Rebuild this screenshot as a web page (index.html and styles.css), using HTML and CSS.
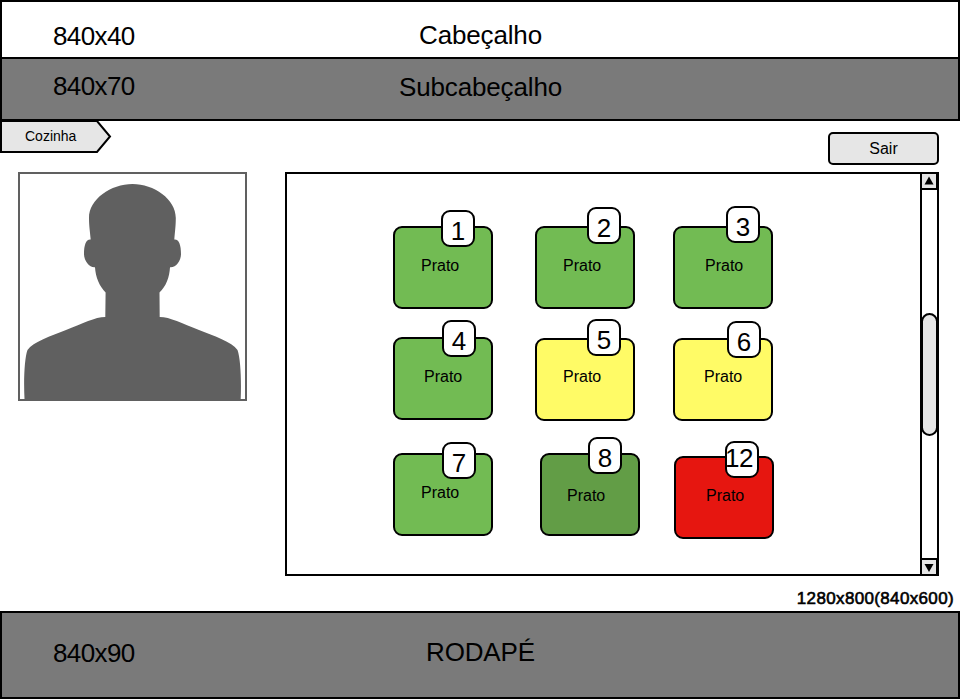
FILE: index.html
```html
<!DOCTYPE html>
<html lang="pt">
<head>
<meta charset="utf-8">
<title>Cozinha</title>
<link rel="stylesheet" href="styles.css">
</head>
<body>
<div class="page">
  <header class="band band-header">
    <span class="band-size">840x40</span>
    <span class="band-title">Cabeçalho</span>
  </header>
  <div class="band band-sub">
    <span class="band-size">840x70</span>
    <span class="band-title">Subcabeçalho</span>
  </div>

  <div class="toolbar">
    <div class="crumb">
      <svg class="crumb-shape" width="112" height="34" viewBox="0 0 112 34"><path d="M1 2H97L110 17.5L97 33H1Z" fill="#e6e6e6" stroke="#000" stroke-width="2"/></svg>
      <span class="crumb-text">Cozinha</span>
    </div>
    <button class="exit">Sair</button>
  </div>

  <main class="content">
    <div class="portrait">
      <svg width="225" height="225" viewBox="20 174 225 225"><path fill="#606060" d="M132.5 184C154 184 175.800 199 175.800 218C175.800 226 175 231 174.300 239.500C179 239 181 245 181 254C181 261 175.500 268 170 267.300C169.500 277 166 286.500 159.500 292.500L159.700 317C170 317 182 323.500 199 330C214 336 232 342 237.500 350C240.500 358 241.500 380 240.700 399H24.500C23.500 380 24.500 358 27.500 350C33 342 51 336 66 330C83 323.500 95 317 105.300 317L105.600 292.500C99.500 286.500 95.500 277 95 267.300C90 268 84 261 84 254C84 245 86 239 90.700 239.500C90 231 89 226 89 218C89 199 111 184 132.500 184Z"/></svg>
    </div>
    <section class="panel">
      <div class="dishes">
        <div class="row row-1">
          <div class="dish green">Prato<span class="badge b1">1</span></div>
          <div class="dish green">Prato<span class="badge b2">2</span></div>
          <div class="dish green t3">Prato<span class="badge b3">3</span></div>
        </div>
        <div class="row row-2">
          <div class="dish green t4">Prato<span class="badge b4">4</span></div>
          <div class="dish yellow t5">Prato<span class="badge b5">5</span></div>
          <div class="dish yellow t6">Prato<span class="badge b6">6</span></div>
        </div>
        <div class="row row-3">
          <div class="dish green t7">Prato<span class="badge b7">7</span></div>
          <div class="dish dark t8">Prato<span class="badge b8">8</span></div>
          <div class="dish red t12">Prato<span class="badge b12">12</span></div>
        </div>
      </div>
      <div class="scrollbar">
        <div class="arrow arrow-up"><svg width="15" height="14" viewBox="0 0 15 14"><path d="M7 2.500L11.500 10.500H2.500Z"/></svg></div>
        <div class="track"><div class="thumb"></div></div>
        <div class="arrow arrow-down"><svg width="15" height="14" viewBox="0 0 15 14"><path d="M7 12L11.500 4H2.500Z"/></svg></div>
      </div>
    </section>
  </main>

  <p class="resolution">1280x800(840x600)</p>

  <footer class="band band-footer">
    <span class="band-size">840x90</span>
    <span class="band-title">RODAPÉ</span>
  </footer>
</div>
</body>
</html>
```
FILE: styles.css
```css
* { box-sizing: border-box; }

body {
  margin: 0;
  background: #fff;
  color: #000;
  font-family: "Liberation Sans", Arial, sans-serif;
  font-size: 16px;
  overflow: hidden;
}

.page { width: 960px; height: 700px; }

.band {
  display: grid;
  grid-template-columns: 1fr auto 1fr;
  align-items: start;
  border: 2px solid #000;
  font-size: 26px;
  line-height: 26px;
}
.band-size { padding-left: 51px; letter-spacing: -0.6px; }
.band-title { padding-left: 1px; letter-spacing: -0.15px; }

.band-header { height: 59px; }
.band-header .band-size { margin-top: 21px; }
.band-header .band-title { margin-top: 20px; }

.band-sub { height: 64px; margin-top: -2px; background: #7a7a7a; }
.band-sub .band-size { margin-top: 14px; }
.band-sub .band-title { margin-top: 15px; }

.band-footer { height: 88px; background: #7a7a7a; }
.band-footer .band-size { margin-top: 27px; }
.band-footer .band-title { margin-top: 26px; }

.toolbar {
  display: flex;
  justify-content: space-between;
  height: 53px;
  margin-top: -2px;
  padding-right: 21px;
}

.crumb { position: relative; width: 112px; height: 34px; }
.crumb-shape { position: absolute; left: 0; top: 0; }
.crumb-text {
  display: block;
  position: relative;
  padding: 9px 0 0 25px;
  font-size: 14px;
  line-height: 16px;
}

.exit {
  width: 111px;
  height: 33px;
  margin-top: 13px;
  padding: 0;
  border: 2px solid #000;
  border-radius: 5px;
  background: #e6e6e6;
  color: #000;
  font: 16px/18px "Liberation Sans", Arial, sans-serif;
}

.content {
  display: flex;
  justify-content: space-between;
  padding: 0 21px 0 18px;
}

.portrait { width: 229px; height: 229px; border: 2px solid #606060; }
.portrait svg { display: block; }

.panel {
  display: flex;
  width: 654px;
  height: 404px;
  border: 2px solid #000;
}

.dishes { flex: 1; padding: 52px 0 0 106px; }
.row { display: flex; }
.row-1 { gap: 42px; height: 111px; }
.row-2 { gap: 42px; height: 116px; }
.row-3 { gap: 47px; }
.row-1 .dish:nth-child(3), .row-2 .dish:nth-child(3) { margin-left: -4px; }
.row-3 .dish:nth-child(3) { margin: 3px 0 0 -13px; }

.dish {
  position: relative;
  width: 100px;
  height: 83px;
  padding: 29px 0 0 26px;
  border: 2px solid #000;
  border-radius: 9px;
  line-height: 18px;
}
.t3 { padding-left: 30px; }
.t4 { padding-left: 29px; }
.t5, .t6 { margin-top: 1px; padding-top: 28px; }
.t6 { padding-left: 29px; }
.t8 { padding-left: 25px; padding-top: 32px; }
.t12 { padding-left: 30px; }

.green { background: #72bb53; }
.yellow { background: #fffb66; }
.dark { background: #629d46; }
.red { background: #e61610; }

.badge {
  position: absolute;
  width: 34px;
  height: 37px;
  padding-top: 6px;
  border: 2px solid #000;
  border-radius: 9px;
  background: #fff;
  font-size: 26px;
  line-height: 26px;
  text-align: center;
}
.b1 { left: 46px; top: -18px; }
.b2 { left: 50px; top: -21px; }
.b3 { left: 51px; top: -22px; }
.b4 { left: 47px; top: -19px; }
.b5 { left: 50px; top: -21px; }
.b6 { left: 52px; top: -19px; }
.b7 { left: 47px; top: -13px; }
.b8 { left: 46px; top: -18px; }
.b12 { left: 49px; top: -17px; padding: 2px 5px 0 0; text-indent: -2px; letter-spacing: -0.5px; }

.scrollbar {
  display: flex;
  flex-direction: column;
  width: 17px;
  border-left: 2px solid #000;
}
.arrow { height: 16px; background: #e6e6e6; border-right: 1px solid #000; }
.arrow svg { display: block; }
.arrow-up { border-bottom: 2px solid #000; }
.arrow-down { border-top: 2px solid #000; }
.track { flex: 1; padding-top: 123px; }
.thumb {
  width: 17px;
  height: 123px;
  margin-left: -1px;
  border: 2px solid #000;
  border-radius: 9px;
  background: #e6e6e6;
}

.resolution {
  height: 35px;
  margin: 0;
  padding: 13px 6px 0 0;
  font-size: 17px;
  line-height: 20px;
  letter-spacing: 0.35px;
  text-align: right;
  -webkit-text-stroke: 0.6px #000;
}
```
